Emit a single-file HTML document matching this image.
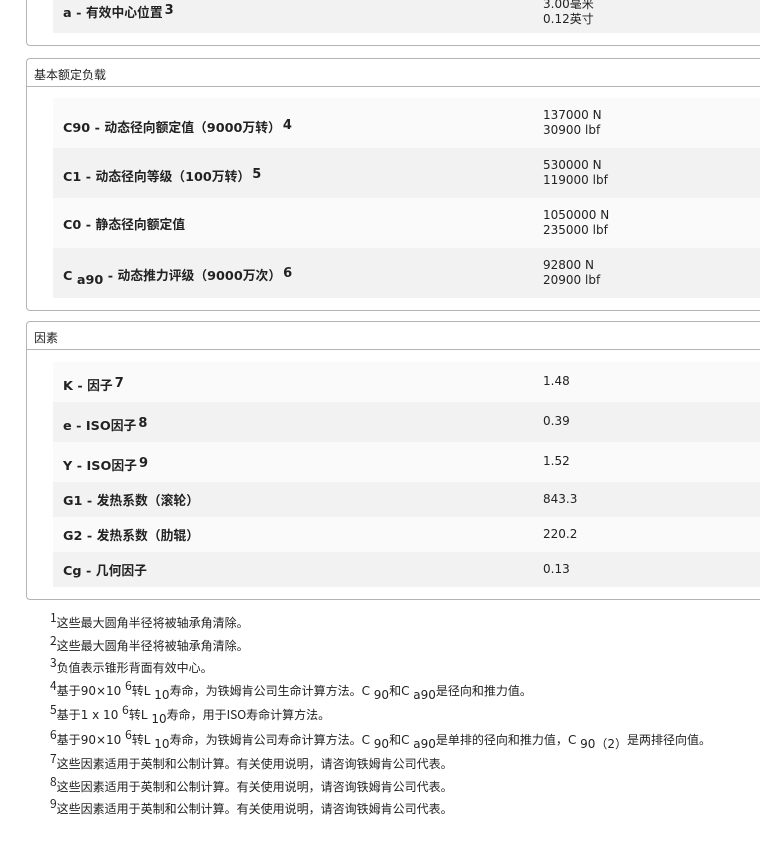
<!DOCTYPE html>
<html><head><meta charset="utf-8"><style>
*{margin:0;padding:0;box-sizing:border-box}
body{width:760px;height:850px;background:#fff;font-family:"DejaVu Sans","Noto Sans CJK SC",sans-serif;font-size:11.5px;color:#222;position:relative;overflow:hidden}
.panel{position:absolute;left:26px;width:800px;border:1px solid #b4b4b4;border-radius:4px;background:#fff}
.hd{height:28px;border-bottom:1px solid #b4b4b4;padding:7px 0 0 7px;font-size:12px;font-family:"Noto Sans CJK SC",sans-serif}
.row{position:absolute;left:26px;width:760px;}
.lbl{position:absolute;left:10px;font-weight:bold;font-size:12.8px;font-family:"DejaVu Sans","Noto Sans CJK SC",sans-serif;color:#222;white-space:nowrap}
.lbl sup{font-size:13px;position:relative;top:-3px;vertical-align:baseline;margin-left:2px}
.val{position:absolute;left:490px;line-height:15px;font-size:12px}
.l{background:#fafafa}.g{background:#f2f2f2}
.fn{position:absolute;left:50px;font-size:12px;font-family:"Noto Sans CJK SC",sans-serif;white-space:nowrap}
.fn sup{font-size:12px;vertical-align:baseline;position:relative;top:-5px}
.fn sub{font-size:12px;vertical-align:baseline;position:relative;top:4px}
.fn .n{font-family:"DejaVu Sans",sans-serif;font-size:12px}
</style></head><body>
<div class="panel" style="top:-20px;height:66px;border-top:none"></div>
<div class="row g" style="left:53px;top:-20px;height:53px"><div class="lbl" style="top:22px">a - 有效中心位置<sup>3</sup></div><div class="val" style="top:17px">3.00毫米<br>0.12英寸</div></div>

<div class="panel" style="top:58px;height:253px"><div class="hd">基本额定负载</div></div>
<div class="row l" style="left:53px;top:98px;height:50px"><div class="lbl" style="top:19px">C90 - 动态径向额定值（9000万转）<sup>4</sup></div><div class="val" style="top:10px">137000 N<br>30900 lbf</div></div>
<div class="row g" style="left:53px;top:148px;height:50px"><div class="lbl" style="top:18px">C1 - 动态径向等级（100万转）<sup>5</sup></div><div class="val" style="top:10px">530000 N<br>119000 lbf</div></div>
<div class="row l" style="left:53px;top:198px;height:50px"><div class="lbl" style="top:16px">C0 - 静态径向额定值</div><div class="val" style="top:10px">1050000 N<br>235000 lbf</div></div>
<div class="row g" style="left:53px;top:248px;height:50px"><div class="lbl" style="top:17px">C <span style="position:relative;top:4px">a90</span> - 动态推力评级（9000万次）<sup>6</sup></div><div class="val" style="top:10px">92800 N<br>20900 lbf</div></div>

<div class="panel" style="top:321px;height:279px"><div class="hd">因素</div></div>
<div class="row l" style="left:53px;top:362px;height:40px"><div class="lbl" style="top:13px">K - 因子<sup>7</sup></div><div class="val" style="top:12px">1.48</div></div>
<div class="row g" style="left:53px;top:402px;height:40px"><div class="lbl" style="top:13px">e - ISO因子<sup>8</sup></div><div class="val" style="top:12px">0.39</div></div>
<div class="row l" style="left:53px;top:442px;height:40px"><div class="lbl" style="top:13px">Y - ISO因子<sup>9</sup></div><div class="val" style="top:12px">1.52</div></div>
<div class="row g" style="left:53px;top:482px;height:35px"><div class="lbl" style="top:8px">G1 - 发热系数（滚轮）</div><div class="val" style="top:10px">843.3</div></div>
<div class="row l" style="left:53px;top:517px;height:35px"><div class="lbl" style="top:8px">G2 - 发热系数（肋辊）</div><div class="val" style="top:10px">220.2</div></div>
<div class="row g" style="left:53px;top:552px;height:35px"><div class="lbl" style="top:8px">Cg - 几何因子</div><div class="val" style="top:10px">0.13</div></div>

<div class="fn" style="top:614px"><sup>1</sup>这些最大圆角半径将被轴承角清除。</div>
<div class="fn" style="top:637px"><sup>2</sup>这些最大圆角半径将被轴承角清除。</div>
<div class="fn" style="top:659px"><sup>3</sup>负值表示锥形背面有效中心。</div>
<div class="fn" style="top:682px"><sup>4</sup>基于<span class="n">90×10 </span><sup>6</sup>转<span class="n">L </span><sub class="n">10</sub>寿命，为铁姆肯公司生命计算方法。<span class="n">C </span><sub class="n">90</sub>和<span class="n">C </span><sub class="n">a90</sub>是径向和推力值。</div>
<div class="fn" style="top:706px"><sup>5</sup>基于<span class="n">1 x 10 </span><sup>6</sup>转<span class="n">L </span><sub class="n">10</sub>寿命，用于ISO寿命计算方法。</div>
<div class="fn" style="top:731px"><sup>6</sup>基于<span class="n">90×10 </span><sup>6</sup>转<span class="n">L </span><sub class="n">10</sub>寿命，为铁姆肯公司寿命计算方法。<span class="n">C </span><sub class="n">90</sub>和<span class="n">C </span><sub class="n">a90</sub>是单排的径向和推力值，<span class="n">C </span><sub class="n">90（2）</sub>是两排径向值。</div>
<div class="fn" style="top:755px"><sup>7</sup>这些因素适用于英制和公制计算。有关使用说明，请咨询铁姆肯公司代表。</div>
<div class="fn" style="top:778px"><sup>8</sup>这些因素适用于英制和公制计算。有关使用说明，请咨询铁姆肯公司代表。</div>
<div class="fn" style="top:800px"><sup>9</sup>这些因素适用于英制和公制计算。有关使用说明，请咨询铁姆肯公司代表。</div>
</body></html>
